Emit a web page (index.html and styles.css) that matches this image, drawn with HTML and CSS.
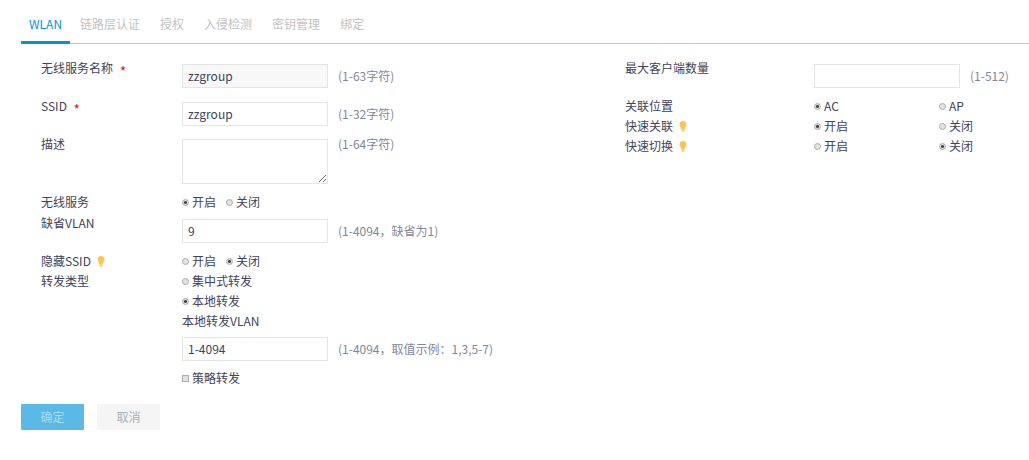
FILE: index.html
```
<!DOCTYPE html>
<html lang="zh-CN">
<head>
<meta charset="utf-8">
<title>WLAN</title>
<link rel="stylesheet" href="styles.css">
</head>
<body>
<svg class="defs" aria-hidden="true"><symbol id="bulb" viewBox="0 0 8 11"><path fill="#ffc553" d="M4 0C1.900 0 .5 1.400.5 3.400c0 1.700 1.500 2.500 1.700 4.600h3.600c.2-2.100 1.700-2.900 1.700-4.600C7.500 1.400 6.100 0 4 0z"/><path fill="#ffd587" d="M2.300 8h3.400v1.800L4.900 11H3.100l-.8-1.200z"/></symbol></svg>
<nav class="tabs">
  <a class="tab active" href="#">WLAN</a>
  <a class="tab" href="#">链路层认证</a>
  <a class="tab" href="#">授权</a>
  <a class="tab" href="#">入侵检测</a>
  <a class="tab" href="#">密钥管理</a>
  <a class="tab" href="#">绑定</a>
</nav>
<form class="form">
  <div class="columns">
    <div class="column">
      <div class="row row-field">
        <label class="label" for="name">无线服务名称 <span class="required">*</span></label>
        <div class="control"><input class="text readonly" id="name" type="text" value="zzgroup" readonly><span class="hint">(1-63字符)</span></div>
      </div>
      <div class="row row-field">
        <label class="label" for="ssid">SSID <span class="required">*</span></label>
        <div class="control"><input class="text" id="ssid" type="text" value="zzgroup"><span class="hint">(1-32字符)</span></div>
      </div>
      <div class="row row-area">
        <label class="label" for="desc">描述</label>
        <div class="control control-top"><textarea class="text area" id="desc"></textarea><span class="hint">(1-64字符)</span></div>
      </div>
      <div class="row row-service" role="radiogroup" aria-labelledby="service">
        <span class="label" id="service">无线服务</span>
        <div class="options">
          <label class="option"><input type="radio" name="service" checked>开启</label>
          <label class="option"><input type="radio" name="service">关闭</label>
        </div>
      </div>
      <div class="row row-vlan">
        <label class="label" for="vlan">缺省VLAN</label>
        <div class="control"><input class="text" id="vlan" type="text" value="9"><span class="hint">(1-4094，缺省为1)</span></div>
      </div>
      <div class="row" role="radiogroup" aria-labelledby="hide">
        <span class="label" id="hide">隐藏SSID <svg class="bulb"><use href="#bulb"/></svg></span>
        <div class="options">
          <label class="option"><input type="radio" name="hide">开启</label>
          <label class="option"><input type="radio" name="hide" checked>关闭</label>
        </div>
      </div>
      <div class="row" role="radiogroup" aria-labelledby="forward">
        <span class="label" id="forward">转发类型</span>
        <div class="stack">
          <label class="option"><input type="radio" name="forward">集中式转发</label>
          <label class="option"><input type="radio" name="forward" checked>本地转发</label>
          <label for="local">本地转发VLAN</label>
          <div class="control local"><input class="text" id="local" type="text" value="1-4094"><span class="hint">(1-4094，取值示例：1,3,5-7)</span></div>
          <label class="option"><input type="checkbox">策略转发</label>
        </div>
      </div>
    </div>
    <div class="column column-right">
      <div class="row row-field">
        <label class="label" for="max">最大客户端数量</label>
        <div class="control"><input class="text" id="max" type="text"><span class="hint">(1-512)</span></div>
      </div>
      <div class="row" role="radiogroup" aria-labelledby="place">
        <span class="label" id="place">关联位置</span>
        <div class="pair">
          <label class="option"><input type="radio" name="place" checked>AC</label>
          <label class="option"><input type="radio" name="place">AP</label>
        </div>
      </div>
      <div class="row" role="radiogroup" aria-labelledby="assoc">
        <span class="label" id="assoc">快速关联 <svg class="bulb"><use href="#bulb"/></svg></span>
        <div class="pair">
          <label class="option"><input type="radio" name="assoc" checked>开启</label>
          <label class="option"><input type="radio" name="assoc">关闭</label>
        </div>
      </div>
      <div class="row" role="radiogroup" aria-labelledby="switch">
        <span class="label" id="switch">快速切换 <svg class="bulb"><use href="#bulb"/></svg></span>
        <div class="pair">
          <label class="option"><input type="radio" name="switch">开启</label>
          <label class="option"><input type="radio" name="switch" checked>关闭</label>
        </div>
      </div>
    </div>
  </div>
  <div class="actions">
    <button class="button primary" type="submit">确定</button>
    <button class="button" type="button">取消</button>
  </div>
</form>
</body>
</html>
```
FILE: styles.css
```
* {
  box-sizing: border-box;
}

body {
  margin: 0;
  padding-left: 21px;
  background: #fff;
  color: #42425a;
  font: 12px/20px "Noto Sans CJK SC", sans-serif;
}

.defs {
  display: none;
}

.tabs {
  display: flex;
  padding-top: 4px;
  border-bottom: 1px solid #c6c6c6;
}

.tab {
  margin-bottom: -1px;
  padding: 10px 10px 7px;
  border-bottom: 3px solid transparent;
  color: #c2c2c2;
  text-decoration: none;
}

.tab.active {
  padding-right: 8px;
  padding-left: 8px;
  border-color: #0096d6;
  color: #0096d6;
}

.columns {
  display: grid;
  grid-template-columns: 584px 1fr;
  padding: 14px 0 16px 20px;
}

.row {
  display: grid;
  grid-template-columns: 141px 1fr;
}

.column-right .row {
  grid-template-columns: 189px 1fr;
}

.row-field {
  padding-bottom: 8px;
}

.row-area,
.row-vlan {
  padding-bottom: 8px;
}

.row-service {
  padding-bottom: 1px;
}

.label {
  display: flex;
  align-items: center;
  align-self: start;
  white-space: pre;
}

.required {
  height: 20px;
  margin-left: 4px;
  color: #e5142c;
  font-size: 14px;
  line-height: 26px;
}

.bulb {
  width: 8px;
  height: 11px;
  margin-left: 3px;
}

.control {
  display: flex;
  align-items: center;
  gap: 10px;
  padding-top: 6px;
  white-space: nowrap;
}

.control-top {
  align-items: flex-start;
  padding-top: 0;
}

.local {
  padding: 6px 0 7px;
}

.text {
  width: 146px;
  height: 24px;
  margin: 0;
  padding: 0 5px 2px;
  border: 1px solid #e3e6e6;
  border-radius: 0;
  background: #fff;
  color: #42425a;
  font: inherit;
}

.text.readonly {
  background: #f8f8f8;
}

.text.area {
  height: 45px;
  margin-top: 5px;
  resize: both;
}

.hint {
  color: #83879a;
}

.options {
  display: flex;
  gap: 10px;
}

.stack {
  display: flex;
  flex-direction: column;
  align-items: flex-start;
}

.pair {
  display: grid;
  grid-template-columns: 125px 1fr;
}

.option {
  display: flex;
  align-items: center;
  gap: 3px;
}

.option input {
  width: 7px;
  height: 7px;
  margin: 0;
  appearance: none;
  border: 1px solid #adadad;
  background: #e2e2e2;
}

.option input[type="radio"] {
  border-radius: 50%;
}

.option input[type="radio"]:checked {
  background: radial-gradient(circle, #444 1px, #dcdcdc 2px);
}

.actions {
  display: flex;
  gap: 13px;
}

.button {
  width: 63px;
  height: 26px;
  padding: 0;
  border: 0;
  border-radius: 1px;
  background: #f5f5f5;
  color: #a5b0b9;
  font: inherit;
}

.button.primary {
  background: #5bbae5;
  color: #a8dbf2;
}
```
